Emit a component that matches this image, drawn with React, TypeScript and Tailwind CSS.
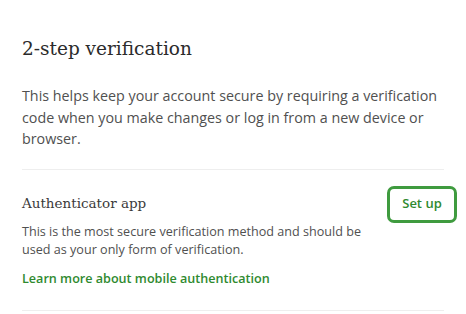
export default function App() {
  return (
    <div className="min-h-[314px] w-[466px] bg-white px-[22px] pt-[36px]" style={{ fontFamily: '"Open Sans", sans-serif' }}>
      <h2 className="text-[18.5px] leading-[26px] text-[#2b2b2b]" style={{ fontFamily: '"DejaVu Serif", serif' }}>
        2-step verification
      </h2>

      <p className="mt-[23px] text-[14.3px] leading-[21.5px] text-[#505050]">
        This helps keep your account secure by requiring a verification code when you make changes or log in from a new device or browser.
      </p>

      <div className="mt-[19px] border-t border-[#eeeeee]" />

      <div className="flex items-start justify-between pt-[16px] pb-[22px]">
        <div className="w-[345px] pt-[6px]">
          <h3 className="text-[13.5px] leading-[22px] text-[#3a3a3a]" style={{ fontFamily: '"DejaVu Serif", serif' }}>
            Authenticator app
          </h3>
          <p className="mt-[9px] text-[12.6px] leading-[18px] text-[#505050]">
            This is the most secure verification method and should be used as your only form of verification.
          </p>
          <a href="#" className="mt-[11px] block text-[12.6px] font-semibold leading-[18px] text-[#2f8a2f]">
            Learn more about mobile authentication
          </a>
        </div>
        <button className="mr-[-13px] h-[37px] w-[70px] rounded-[7px] border-[3px] border-[#3f9b3f] text-[13px] font-semibold text-[#2f8a2f]">
          Set up
        </button>
      </div>

      <div className="border-t border-[#eeeeee]" />
    </div>
  );
}
